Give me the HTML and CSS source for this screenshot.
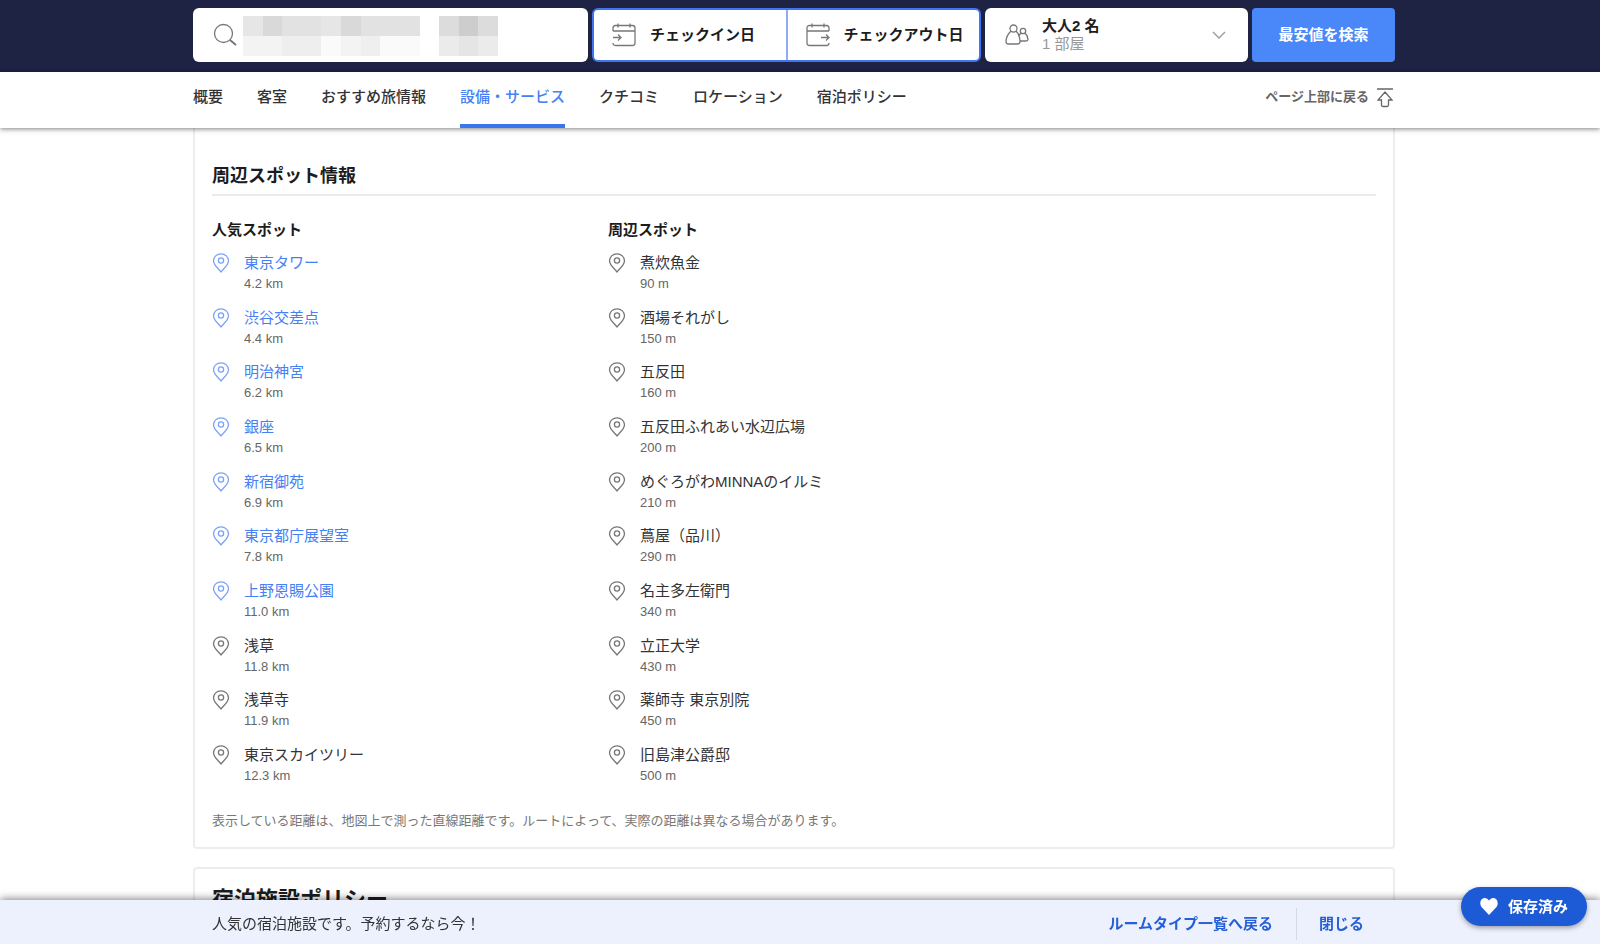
FILE: index.html
```html
<!DOCTYPE html>
<html lang="ja">
<head>
<meta charset="utf-8">
<meta name="viewport" content="width=device-width, initial-scale=1">
<title>周辺スポット情報</title>
<link rel="stylesheet" href="styles.css">
</head>
<body>
<svg class="sprite" aria-hidden="true">
  <symbol id="pin" viewBox="0 0 18 20"><path d="M9 19C7 16 1.500 12.500 1.500 7.800A7.500 7 0 0 1 16.500 7.800C16.500 12.500 11 16 9 19Z"/><circle cx="9" cy="7.500" r="2.600"/></symbol>
</svg>
<header class="top">
  <form class="wrap search">
    <label class="field place">
      <svg class="icon glass" viewBox="0 0 24 24" aria-hidden="true"><circle cx="10.500" cy="10.500" r="9"/><path d="M17 17l6 5" stroke-width="2"/></svg>
      <svg class="mosaic" viewBox="0 0 13 2" preserveAspectRatio="none" shape-rendering="crispEdges" aria-hidden="true">
        <path fill="#e2e2e2" d="M0 0h9v1H0z"/><path fill="#d9d9d9" d="M1 0h1v1H1zM5 0h1v1H5z"/><path fill="#e6e6e6" d="M0 0h1v1H0zM4 0h1v1H4z"/>
        <path fill="#f3f3f3" d="M0 1h2v1H0z"/><path fill="#eeeeee" d="M2 1h2v1H2z"/><path fill="#fafafa" d="M4 1h5v1H4z"/><path fill="#f3f3f3" d="M5 1h1v1H5z"/><path fill="#efefef" d="M6 1h1v1H6z"/>
        <path fill="#dcdcdc" d="M10 0h3v1h-3z"/><path fill="#cdcdcd" d="M11 0h1v1h-1z"/><path fill="#ebebeb" d="M10 1h3v1h-3z"/><path fill="#e5e5e5" d="M11 1h1v1h-1z"/>
      </svg>
      <input type="text" aria-label="目的地">
    </label>
    <div class="field dates">
      <button type="button" class="date">
        <svg class="icon" viewBox="0 0 24 24" aria-hidden="true"><path d="M1 8V5q0-2.500 2.500-2.500h17Q23 2.500 23 5v15q0 2.500-2.500 2.500h-17Q1 22.500 1 20M1 8h22M6 .5v4M18 .5v4M1 14.500h8M6 11.500l3 3-3 3"/></svg>
        チェックイン日
      </button>
      <button type="button" class="date">
        <svg class="icon" viewBox="0 0 24 24" aria-hidden="true"><path d="M23 8V5q0-2.500-2.500-2.500h-17Q1 2.500 1 5v15q0 2.500 2.500 2.500h17Q23 22.500 23 20M1 8h22M6 .5v4M18 .5v4M15 14.500h8M20 11.500l3 3-3 3"/></svg>
        チェックアウト日
      </button>
    </div>
    <button type="button" class="field guests">
      <svg class="icon" viewBox="0 0 24 24" aria-hidden="true"><circle cx="8.500" cy="5.500" r="3.500"/><path d="M6 8C3 11 1 15 1 18.500Q1 21 3.500 21h9q2.500 0 2.500-2.500C15 15 14 11 11 8"/><circle cx="18" cy="8" r="2.700"/><path d="M16 10l-2.500 3M20 10c2 2 3 4.500 3 6.500q0 1.500-2 1.500h-6"/></svg>
      <span class="party"><strong>大人2 名</strong><span>1 部屋</span></span>
      <svg class="chevron" viewBox="0 0 14 8" aria-hidden="true"><path d="M1 1l6 6 6-6"/></svg>
    </button>
    <button type="submit" class="go">最安値を検索</button>
  </form>
</header>
<nav class="tabs">
  <div class="wrap tabrow">
    <a href="#">概要</a><a href="#">客室</a><a href="#">おすすめ旅情報</a><a href="#" class="on">設備・サービス</a><a href="#">クチコミ</a><a href="#">ロケーション</a><a href="#">宿泊ポリシー</a>
    <a href="#" class="totop">ページ上部に戻る
      <svg viewBox="0 0 16 20" aria-hidden="true"><path d="M0 1h16M8 4l7 8h-3.500v5q0 1.500-1.500 1.500H6q-1.500 0-1.500-1.500v-5H1z"/></svg>
    </a>
  </div>
</nav>
<main>
  <div class="wrap cards">
    <section class="card spots">
      <h2>周辺スポット情報</h2>
      <div class="columns">
        <div>
          <h3>人気スポット</h3>
          <ul>
            <li class="link"><svg><use href="#pin"/></svg><a href="#">東京タワー</a><small>4.2 km</small></li>
            <li class="link"><svg><use href="#pin"/></svg><a href="#">渋谷交差点</a><small>4.4 km</small></li>
            <li class="link"><svg><use href="#pin"/></svg><a href="#">明治神宮</a><small>6.2 km</small></li>
            <li class="link"><svg><use href="#pin"/></svg><a href="#">銀座</a><small>6.5 km</small></li>
            <li class="link"><svg><use href="#pin"/></svg><a href="#">新宿御苑</a><small>6.9 km</small></li>
            <li class="link"><svg><use href="#pin"/></svg><a href="#">東京都庁展望室</a><small>7.8 km</small></li>
            <li class="link"><svg><use href="#pin"/></svg><a href="#">上野恩賜公園</a><small>11.0 km</small></li>
            <li><svg><use href="#pin"/></svg><span>浅草</span><small>11.8 km</small></li>
            <li><svg><use href="#pin"/></svg><span>浅草寺</span><small>11.9 km</small></li>
            <li><svg><use href="#pin"/></svg><span>東京スカイツリー</span><small>12.3 km</small></li>
          </ul>
        </div>
        <div>
          <h3>周辺スポット</h3>
          <ul>
            <li><svg><use href="#pin"/></svg><span>煮炊魚金</span><small>90 m</small></li>
            <li><svg><use href="#pin"/></svg><span>酒場それがし</span><small>150 m</small></li>
            <li><svg><use href="#pin"/></svg><span>五反田</span><small>160 m</small></li>
            <li><svg><use href="#pin"/></svg><span>五反田ふれあい水辺広場</span><small>200 m</small></li>
            <li><svg><use href="#pin"/></svg><span>めぐろがわMINNAのイルミ</span><small>210 m</small></li>
            <li><svg><use href="#pin"/></svg><span>蔦屋（品川）</span><small>290 m</small></li>
            <li><svg><use href="#pin"/></svg><span>名主多左衛門</span><small>340 m</small></li>
            <li><svg><use href="#pin"/></svg><span>立正大学</span><small>430 m</small></li>
            <li><svg><use href="#pin"/></svg><span>薬師寺 東京別院</span><small>450 m</small></li>
            <li><svg><use href="#pin"/></svg><span>旧島津公爵邸</span><small>500 m</small></li>
          </ul>
        </div>
      </div>
      <p class="note">表示している距離は、地図上で測った直線距離です。ルートによって、実際の距離は異なる場合があります。</p>
    </section>
    <section class="card policy">
      <h2>宿泊施設ポリシー</h2>
    </section>
  </div>
</main>
<footer class="bar">
  <div class="wrap barrow">
    <span>人気の宿泊施設です。予約するなら今！</span>
    <a href="#">ルームタイプ一覧へ戻る</a>
    <button type="button">閉じる</button>
  </div>
</footer>
<button type="button" class="saved">
  <svg viewBox="0 0 18 17" aria-hidden="true"><path d="M9 17L1.500 9C-1 5.500.5 0 5 0q2.500 0 4 2.500Q10.500 0 13 0c4.500 0 6 5.500 3.500 9z"/></svg>
  保存済み
</button>
</body>
</html>
```
FILE: styles.css
```css
* { box-sizing: border-box; }
body {
  margin: 0;
  height: 100vh;
  overflow: hidden;
  background: #fff;
  color: #333336;
  font: 15px/22px "Liberation Sans", "Noto Sans CJK JP", sans-serif;
}
.sprite { display: none; }
svg { flex: none; fill: none; stroke: currentColor; stroke-width: 1.3; }
a { color: inherit; text-decoration: none; }
button, input { font: inherit; color: inherit; border: 0; background: none; padding: 0; }
h2, h3, p, ul { margin: 0; padding: 0; }
.top, .tabs, .bar, main { display: flex; justify-content: center; padding-right: 12px; }
.wrap { width: 100%; max-width: 1202px; }

.top { background: #1e2243; padding-top: 8px; padding-bottom: 10px; }
.search { display: grid; grid-template-columns: minmax(0, 395fr) minmax(0, 389fr) minmax(0, 263fr) minmax(0, 143fr); gap: 4px; }
.field { height: 54px; display: flex; align-items: center; background: #fff; border-radius: 6px; }
.icon { width: 24px; height: 24px; color: #777; }
.place { padding-left: 20px; }
.mosaic { width: 255px; height: 40px; margin: 2px 0 0 6px; stroke: none; }
.place input { flex: 1; min-width: 0; outline: 0; }
.dates { border: 2px solid #3f76ee; align-items: stretch; overflow: hidden; }
.date { flex: 1 0 0; display: flex; align-items: center; gap: 14px; padding-left: 18px; font-weight: 700; color: #1c1c20; white-space: nowrap; }
.date + .date { border-left: 2px solid #8eabf5; }
.guests { gap: 13px; padding: 0 22px 0 20px; text-align: left; }
.party { flex: 1; line-height: 18px; color: #999; }
.party strong, .party span { display: block; }
.party strong { color: #1c1c20; }
.chevron { width: 14px; height: 8px; color: #999; }
.go { background: #4a87f8; color: #fff; font-weight: 700; border-radius: 4px; }

.tabs { position: relative; z-index: 1; background: #fff; box-shadow: 0 1px 5px rgba(0, 0, 0, .5); }
.tabrow { display: flex; gap: 34px; }
.tabrow a { height: 56px; padding-top: 14px; font-weight: 500; }
.tabrow .on { color: #4580f5; border-bottom: 4px solid #3a75ee; }
.tabrow .totop { margin-left: auto; display: flex; gap: 8px; padding-right: 2px; font-size: 13px; font-weight: 700; color: #666; }
.totop svg { width: 16px; height: 20px; margin-top: 2px; }

.cards { display: flex; flex-direction: column; gap: 18px; }
.card { border: 2px solid #ededee; border-radius: 4px; padding: 0 17px; }
.spots { border-top: 0; border-radius: 0 0 4px 4px; padding-top: 34px; padding-bottom: 14px; }
.spots h2 { font-size: 18px; line-height: 28px; padding-bottom: 4px; border-bottom: 2px solid #e9ebec; color: #1c1c20; }
.columns { display: grid; grid-template-columns: repeat(3, 1fr); column-gap: 24px; padding-top: 23px; }
.columns h3 { font-size: 15px; line-height: 22px; color: #1c1c20; }
ul { list-style: none; height: 534px; margin-top: 11px; display: flex; flex-direction: column; justify-content: space-between; }
li { display: grid; grid-template-columns: 18px 1fr; column-gap: 14px; line-height: 22px; }
li svg { width: 18px; height: 20px; margin-top: 1px; color: #777; }
li small { grid-column: 2; font-size: 13px; line-height: 20px; color: #666; }
.link a { color: #4580f5; }
.link svg { color: #7ba2f7; }
.note { margin-top: 23px; font-size: 13px; line-height: 24px; color: #777; }
.policy { padding-top: 15px; }
.policy h2 { font-size: 22px; line-height: 32px; color: #1c1c20; }

.bar { position: fixed; left: 0; right: 0; bottom: 0; z-index: 2; background: #edf1fd; box-shadow: 0 -1px 8px rgba(0, 0, 0, .5); }
.barrow { display: flex; align-items: center; height: 44px; padding: 4px 31px 0 19px; }
.barrow a { margin-left: auto; padding-right: 23px; border-right: 1px solid #d3d8e8; line-height: 32px; }
.barrow button { padding-left: 22px; }
.barrow a, .barrow button { color: #2660d8; font-weight: 700; }
.saved { position: fixed; right: 13px; bottom: 18px; z-index: 3; display: flex; align-items: center; gap: 10px; height: 39px; padding: 0 19px; border-radius: 20px; background: #1d5ad6; color: #fff; font-weight: 700; box-shadow: 0 2px 5px rgba(0, 0, 0, .35); }
.saved svg { width: 18px; height: 17px; fill: currentColor; stroke: none; }
```
